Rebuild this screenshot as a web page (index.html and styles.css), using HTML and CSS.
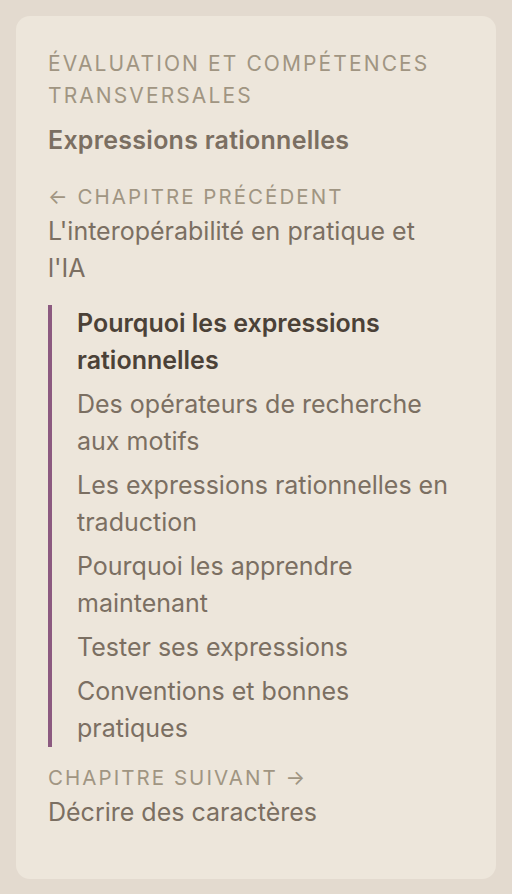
FILE: index.html
```html
<!DOCTYPE html>
<html lang="fr">
<head>
    <meta charset="UTF-8">
    <meta name="viewport" content="width=device-width, initial-scale=1.0">
    <title>Expressions rationnelles</title>
    <link rel="stylesheet" href="styles.css">
</head>
<body>
    <!-- Sommaire du chapitre -->
    <nav class="toc">
        <div class="part">Évaluation et compétences transversales</div>
        <div class="chapter">Expressions rationnelles</div>

        <a class="nav-link" href="#">
            <span class="nav-label">← Chapitre précédent</span>
            <span class="nav-title">L'interopérabilité en pratique et l'IA</span>
        </a>

        <ul class="sections">
            <li class="active">Pourquoi les expressions rationnelles</li>
            <li>Des opérateurs de recherche aux motifs</li>
            <li>Les expressions rationnelles en traduction</li>
            <li>Pourquoi les apprendre maintenant</li>
            <li>Tester ses expressions</li>
            <li>Conventions et bonnes pratiques</li>
        </ul>

        <a class="nav-link" href="#">
            <span class="nav-label">Chapitre suivant →</span>
            <span class="nav-title">Décrire des caractères</span>
        </a>
    </nav>
</body>
</html>
```

FILE: styles.css
```css
body {
    margin: 0;
    padding: 16px;
    font-family: Inter, "Noto Sans", sans-serif;
    background-color: #e3dacf;
}

/* Carte du sommaire */
.toc {
    background-color: #ede6db;
    border-radius: 14px;
    padding: 32px 32px 48px;
}

.part {
    font-size: 21px;
    line-height: 32px;
    letter-spacing: 0.1em;
    text-transform: uppercase;
    color: #a09582;
}

.chapter {
    margin-top: 12px;
    font-size: 25px;
    line-height: 32px;
    font-weight: 600;
    letter-spacing: 0.01em;
    color: #7b6f62;
}

/* Liens chapitre précédent / suivant */
.nav-link {
    display: block;
    text-decoration: none;
}

.chapter + .nav-link {
    margin-top: 25px;
}

.nav-label {
    display: block;
    font-size: 20.5px;
    line-height: 32px;
    letter-spacing: 0.1em;
    text-transform: uppercase;
    color: #a09582;
}

.nav-title {
    display: block;
    max-width: 390px;
    font-size: 25px;
    line-height: 37px;
    color: #7b6f62;
}

/* Sections */
.sections {
    list-style: none;
    margin: 18px 0 15px;
    padding: 0 0 0 25px;
    border-left: 4px solid #8c5a80;
}

.sections li {
    font-size: 25px;
    line-height: 37px;
    color: #7b6f62;
    margin-bottom: 7px;
}

.sections li:last-child {
    margin-bottom: 0;
}

.sections li.active {
    font-weight: 600;
    color: #4b4137;
}
```
